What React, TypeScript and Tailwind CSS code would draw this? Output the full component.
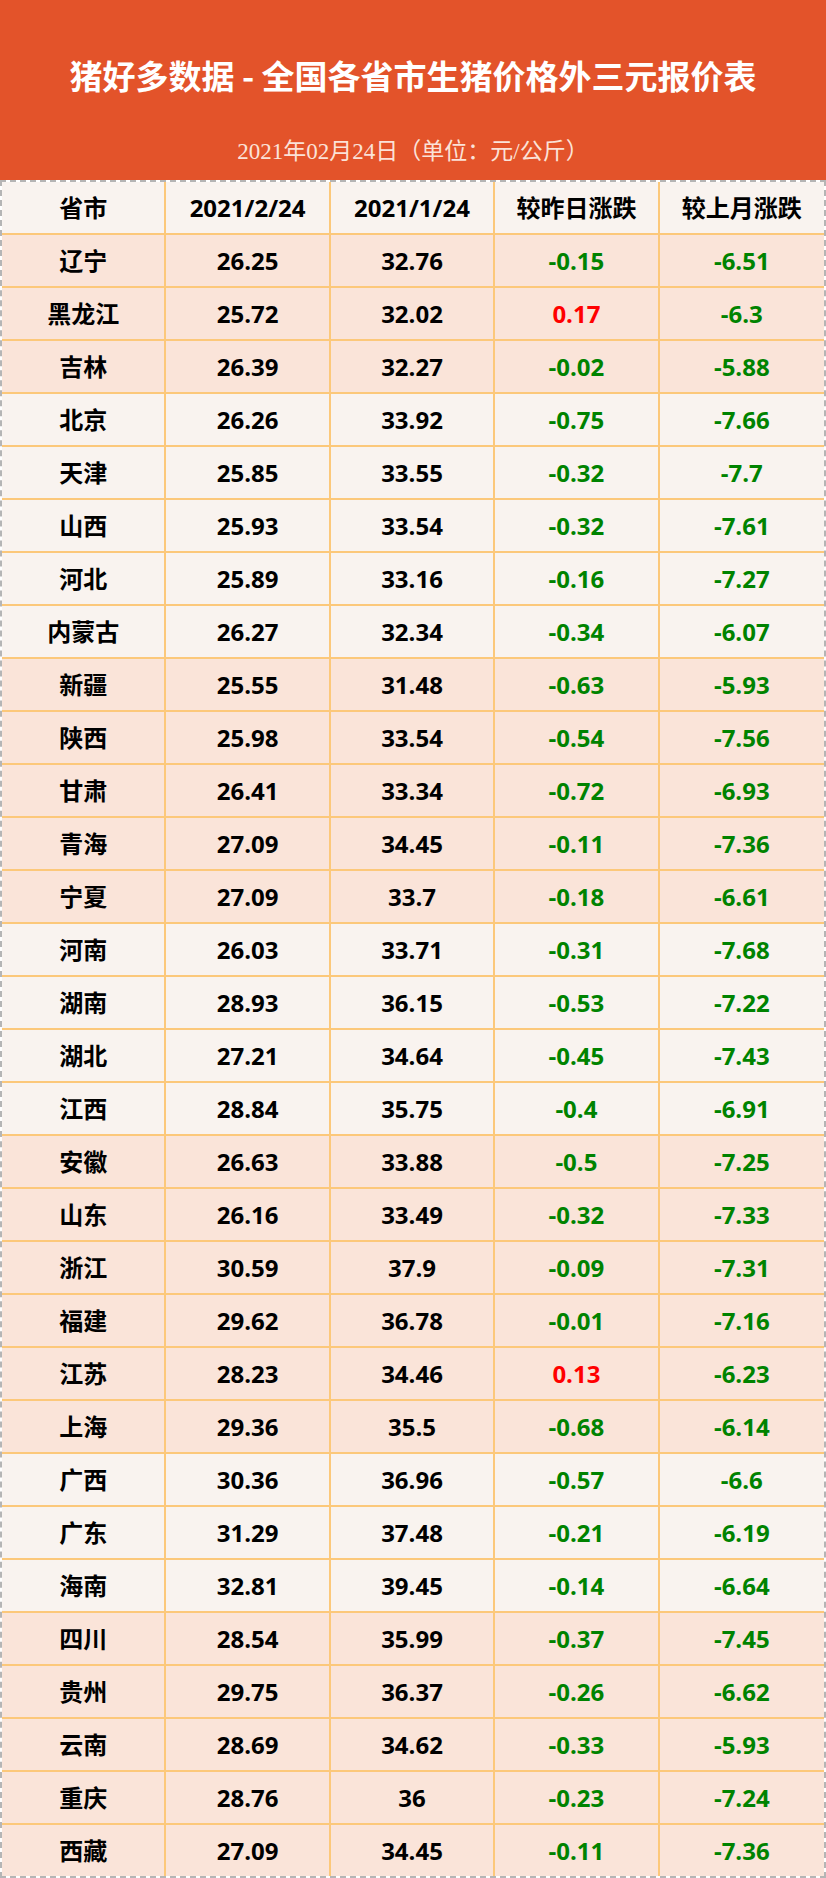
import React from 'react';

type Row = {
  name: string;
  now: string;
  lastMonth: string;
  day: string;
  month: string;
  peach: boolean;
};

// region groups alternate the row tint: 东北, 华北, 西北, 华中, 华东, 华南, 西南
const raw: [string, string, string, string, string, boolean][] = [
  ['辽宁', '26.25', '32.76', '-0.15', '-6.51', true],
  ['黑龙江', '25.72', '32.02', '0.17', '-6.3', true],
  ['吉林', '26.39', '32.27', '-0.02', '-5.88', true],
  ['北京', '26.26', '33.92', '-0.75', '-7.66', false],
  ['天津', '25.85', '33.55', '-0.32', '-7.7', false],
  ['山西', '25.93', '33.54', '-0.32', '-7.61', false],
  ['河北', '25.89', '33.16', '-0.16', '-7.27', false],
  ['内蒙古', '26.27', '32.34', '-0.34', '-6.07', false],
  ['新疆', '25.55', '31.48', '-0.63', '-5.93', true],
  ['陕西', '25.98', '33.54', '-0.54', '-7.56', true],
  ['甘肃', '26.41', '33.34', '-0.72', '-6.93', true],
  ['青海', '27.09', '34.45', '-0.11', '-7.36', true],
  ['宁夏', '27.09', '33.7', '-0.18', '-6.61', true],
  ['河南', '26.03', '33.71', '-0.31', '-7.68', false],
  ['湖南', '28.93', '36.15', '-0.53', '-7.22', false],
  ['湖北', '27.21', '34.64', '-0.45', '-7.43', false],
  ['江西', '28.84', '35.75', '-0.4', '-6.91', false],
  ['安徽', '26.63', '33.88', '-0.5', '-7.25', true],
  ['山东', '26.16', '33.49', '-0.32', '-7.33', true],
  ['浙江', '30.59', '37.9', '-0.09', '-7.31', true],
  ['福建', '29.62', '36.78', '-0.01', '-7.16', true],
  ['江苏', '28.23', '34.46', '0.13', '-6.23', true],
  ['上海', '29.36', '35.5', '-0.68', '-6.14', true],
  ['广西', '30.36', '36.96', '-0.57', '-6.6', false],
  ['广东', '31.29', '37.48', '-0.21', '-6.19', false],
  ['海南', '32.81', '39.45', '-0.14', '-6.64', false],
  ['四川', '28.54', '35.99', '-0.37', '-7.45', true],
  ['贵州', '29.75', '36.37', '-0.26', '-6.62', true],
  ['云南', '28.69', '34.62', '-0.33', '-5.93', true],
  ['重庆', '28.76', '36', '-0.23', '-7.24', true],
  ['西藏', '27.09', '34.45', '-0.11', '-7.36', true],
];

const rows: Row[] = raw.map(([name, now, lastMonth, day, month, peach]) => ({
  name,
  now,
  lastMonth,
  day,
  month,
  peach,
}));

const changeColor = (v: string) => (v.startsWith('-') ? 'text-[#008300]' : 'text-[#ff0000]');

function Cell({ children, last, className = '' }: { children: React.ReactNode; last?: boolean; className?: string }) {
  return (
    <div
      className={`flex items-center justify-center ${last ? '' : 'border-r-2 border-[#fcc87a]'} ${className}`}
    >
      {children}
    </div>
  );
}

export default function App() {
  return (
    <div className="w-[826px] bg-white font-['Open_Sans','Noto_Sans_CJK_SC',sans-serif]">
      {/* Banner */}
      <div className="h-[180px] bg-[#e3532a] flex flex-col items-center">
        <h1 className="pt-[53px] text-[33px] leading-[44px] font-bold text-white font-['Noto_Sans_CJK_SC',sans-serif]">
          猪好多数据 - 全国各省市生猪价格外三元报价表
        </h1>
        <p className="mt-[40px] text-[23px] leading-[30px] text-[#fbe2d8] font-['Liberation_Serif','Noto_Sans_CJK_SC',serif]">
          2021年02月24日（单位：元/公斤）
        </p>
      </div>

      {/* Table */}
      <div className="border-2 border-dashed border-[#b5b5b5]">
        <div className="grid grid-cols-5 h-[53px] bg-[#f9f3ef] border-b-2 border-[#fcc87a] text-[24px] font-bold text-black">
          <Cell>省市</Cell>
          <Cell>2021/2/24</Cell>
          <Cell>2021/1/24</Cell>
          <Cell>较昨日涨跌</Cell>
          <Cell last>较上月涨跌</Cell>
        </div>
        {rows.map((r, i) => {
          const isLast = i === rows.length - 1;
          return (
            <div
              key={r.name}
              className={`grid grid-cols-5 text-[24px] font-bold text-black ${
                r.peach ? 'bg-[#fae4d9]' : 'bg-[#f9f3ef]'
              } ${isLast ? 'h-[51px]' : 'h-[53px] border-b-2 border-[#fcc87a]'}`}
            >
              <Cell>{r.name}</Cell>
              <Cell>{r.now}</Cell>
              <Cell>{r.lastMonth}</Cell>
              <Cell className={changeColor(r.day)}>{r.day}</Cell>
              <Cell last className={changeColor(r.month)}>
                {r.month}
              </Cell>
            </div>
          );
        })}
      </div>
    </div>
  );
}
